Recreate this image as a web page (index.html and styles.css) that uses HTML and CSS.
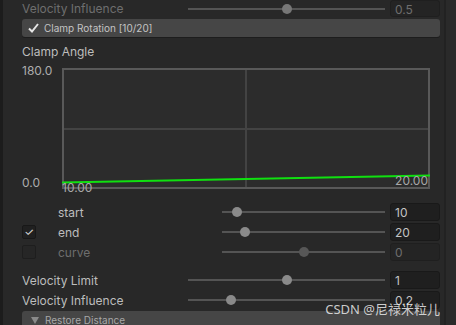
FILE: index.html
```html
<!DOCTYPE html>
<html>
	<head>
		<meta charset="UTF-8">
		<title>Clamp Rotation</title>
		<link rel="stylesheet" href="styles.css">
	</head>
	<body>
		<div id="window">
			<div class="edge"></div>
			<div class="panel">
				<!-- 上一个属性 -->
				<div class="row row_top dim">
					<span class="label">Velocity Influence</span>
					<div class="slider"><i style="left: 50%"></i></div>
					<span class="field">0.5</span>
				</div>
				<!-- 折叠标题 -->
				<div class="header">
					<svg class="tick" width="11" height="10" viewBox="0 0 11 10"><polyline points="1,5.5 4,8.5 10,1" fill="none" stroke="#e6e6e6" stroke-width="2"/></svg>
					<span>Clamp Rotation [10/20]</span>
				</div>
				<div class="title">Clamp Angle</div>
				<!-- 曲线 -->
				<div class="graph">
					<div class="axis">
						<span>180.0</span>
						<span>0.0</span>
					</div>
					<div class="plot">
						<svg width="368" height="121" viewBox="0 0 368 121">
							<line x1="2" y1="61" x2="366" y2="61" stroke="#434343" stroke-width="2"/>
							<line x1="184" y1="2" x2="184" y2="119" stroke="#434343" stroke-width="2"/>
							<rect x="1" y="1" width="366" height="119" fill="none" stroke="#595959" stroke-width="2"/>
							<line x1="0" y1="114.5" x2="368" y2="107.5" stroke="#10e010" stroke-width="2"/>
						</svg>
						<span class="min">10.00</span>
						<span class="max">20.00</span>
					</div>
				</div>
				<!-- 范围 -->
				<div class="row sub">
					<span class="box none"></span>
					<span class="label">start</span>
					<div class="slider"><i style="left: 9%"></i></div>
					<span class="field">10</span>
				</div>
				<div class="row sub">
					<span class="box">&#10003;</span>
					<span class="label">end</span>
					<div class="slider"><i style="left: 14%"></i></div>
					<span class="field">20</span>
				</div>
				<div class="row sub dim">
					<span class="box"></span>
					<span class="label">curve</span>
					<div class="slider"><i style="left: 50%"></i></div>
					<span class="field">0</span>
				</div>
				<div class="row row_gap">
					<span class="label">Velocity Limit</span>
					<div class="slider"><i style="left: 50%"></i></div>
					<span class="field">1</span>
				</div>
				<div class="row">
					<span class="label">Velocity Influence</span>
					<div class="slider"><i style="left: 22%"></i></div>
					<span class="field">0.2</span>
				</div>
				<div class="header header_fold">
					<span class="arrow"></span>
					<span>Restore Distance</span>
				</div>
			</div>
			<div class="divider"></div>
			<div class="scroll"></div>
			<div class="mark">CSDN @尼禄米粒儿</div>
		</div>
	</body>
</html>
```

FILE: styles.css
```css
*{
	padding: 0;
	margin: 0;
	box-sizing: border-box;
}
body{
	background: #282828;
	font-family: Inter, "Noto Sans", sans-serif;
	font-size: 12px;
	color: #bdbdbd;
	overflow: hidden;
}
#window{
	position: relative;
	display: flex;
	width: 456px;
	height: 325px;
	overflow: hidden;
}
.edge{
	width: 3px;
	background: #1c1c1c;
}
.panel{
	width: 441px;
	padding: 0 4px 0 19px;
	background: #282828;
}
.divider{
	width: 2px;
	background: #222222;
}
.scroll{
	flex: 1;
	background: #2a2a2a;
}
/* 属性行 */
.row{
	display: flex;
	align-items: center;
	height: 20px;
}
.row_top{
	height: 17px;
}
.row_gap{
	margin-top: 8px;
}
.row .label{
	width: 166px;
	white-space: nowrap;
}
.slider{
	position: relative;
	flex: 1;
	height: 10px;
}
.slider:before{
	content: "";
	position: absolute;
	left: 0;
	right: 0;
	top: 4px;
	height: 2px;
	background: #545454;
}
.slider i{
	position: absolute;
	top: 0;
	width: 10px;
	height: 10px;
	margin-left: -5px;
	border-radius: 50%;
	background: #8a8a8a;
}
.field{
	width: 50px;
	height: 18px;
	margin-left: 5px;
	padding-left: 4px;
	line-height: 17px;
	background: #1f1f1f;
	border: 1px solid #191919;
	border-radius: 3px;
	color: #c4c4c4;
}
.row_top .field{
	height: 17px;
}
.dim .label,
.dim .field{
	color: #6e6e6e;
}
.dim .field{
	background: #242424;
	border-color: #1f1f1f;
}
.row_top .slider i{
	background: #777777;
}
.dim.sub .slider i{
	background: #575757;
}
/* 子项 */
.sub .box{
	width: 14px;
	height: 14px;
	margin-right: 22px;
	background: #202020;
	border: 1px solid #181818;
	border-radius: 2px;
	color: #e0e0e0;
	font-size: 11px;
	line-height: 12px;
	text-align: center;
}
.sub .box.none{
	visibility: hidden;
}
.dim .box{
	background: #262626;
	border-color: #1e1e1e;
}
.sub .label{
	width: 164px;
}
/* 折叠标题 */
.header{
	display: flex;
	align-items: center;
	height: 18px;
	margin-top: 2px;
	padding-left: 6px;
	background: #464646;
	border-radius: 3px;
	box-shadow: 0 1px 0 #1d1d1d;
	font-size: 10px;
	color: #c4c4c4;
}
.tick{
	margin-right: 5px;
}
.header_fold{
	margin-top: 1px;
	padding-left: 9px;
	color: #a8a8a8;
}
.arrow{
	width: 0;
	height: 0;
	margin-right: 6px;
	border-left: 4px solid transparent;
	border-right: 4px solid transparent;
	border-top: 7px solid #8a8a8a;
}
.title{
	height: 16px;
	margin-top: 7px;
	line-height: 16px;
}
/* 曲线 */
.graph{
	display: flex;
	margin-top: 8px;
}
.axis{
	display: flex;
	flex-direction: column;
	justify-content: space-between;
	width: 40px;
	height: 126px;
	margin-top: -4px;
	line-height: 14px;
	color: #adadad;
}
.plot{
	position: relative;
	width: 368px;
	height: 121px;
	background: #2c2c2c;
}
.plot svg{
	display: block;
}
.plot span{
	position: absolute;
	line-height: 14px;
	color: #a8a8a8;
}
.plot .min{
	left: 0;
	top: 113px;
}
.plot .max{
	right: 2px;
	top: 106px;
}
.graph + .sub{
	margin-top: 12px;
}
/* 水印 */
.mark{
	position: absolute;
	right: 16px;
	top: 299px;
	font-family: "Noto Sans", "Noto Sans CJK SC", sans-serif;
	font-size: 13px;
	color: rgba(235, 235, 235, 0.85);
}
```
